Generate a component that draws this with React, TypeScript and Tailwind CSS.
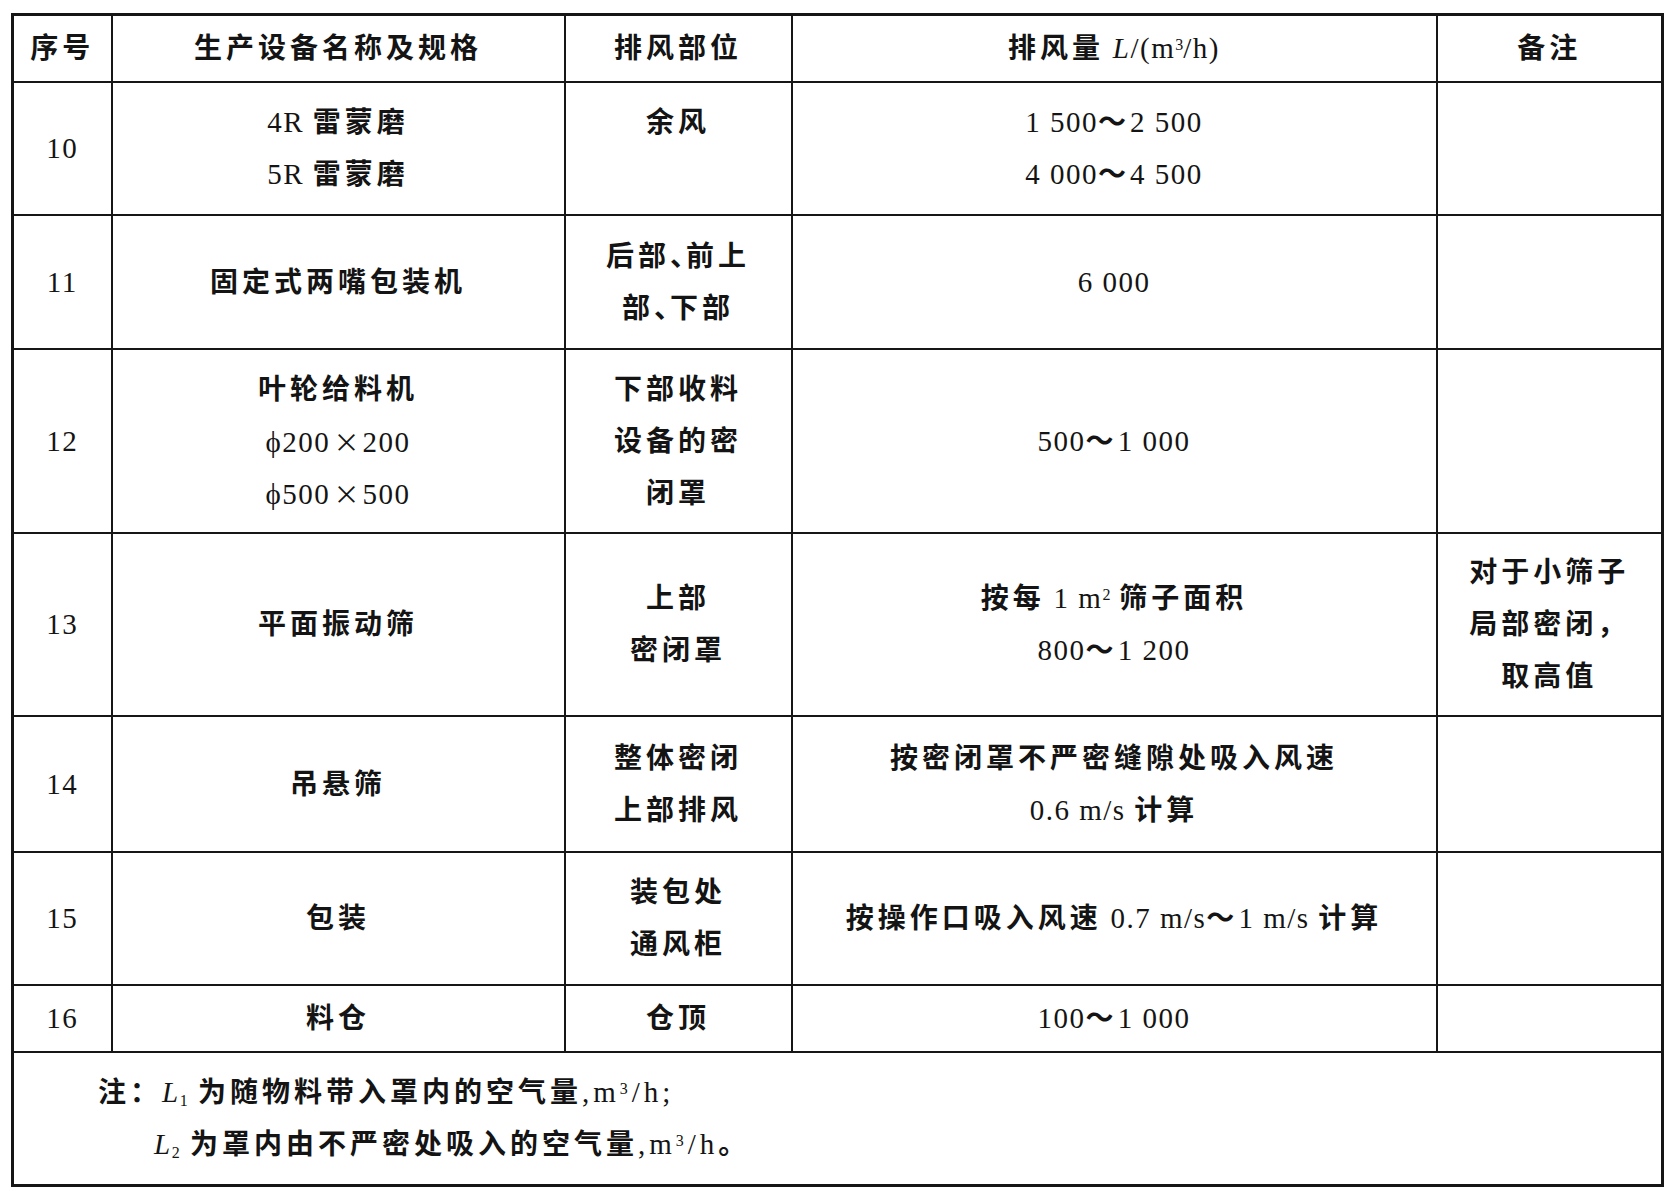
import React from 'react';

const CJK = /([\u3000-\u303f\u4e00-\u9fff\uff00-\uffef]+)/;

// CJK run: spaced and heavier; the enumeration comma sits tight like in print
const Han = ({ text }: { text: string }) => {
  const bits = text.split(/(、)/);
  return (
    <>
      {bits.map((b, i) =>
        b === '、' ? (
          <span key={i} className="font-semibold tracking-[-12px]">、</span>
        ) : (
          <span key={i} className="tracking-[4px] font-semibold">{b}</span>
        )
      )}
    </>
  );
};

const Latin = ({ children, wide }: { children: React.ReactNode; wide?: boolean }) => (
  <span className={wide ? 'text-[29px] tracking-[4px]' : 'text-[29px] tracking-[1.5px]'}>{children}</span>
);

// splits a line into CJK runs and latin runs (serif)
const Line = ({ text }: { text: string }) => {
  const parts = text.split(CJK);
  return (
    <div className="h-[52px] whitespace-pre">
      {parts.map((p, i) => (i % 2 === 1 ? <Han key={i} text={p} /> : <Latin key={i}>{p}</Latin>))}
    </div>
  );
};

const Times = () => <span className="font-['Noto_Sans_CJK_SC'] text-[26px] px-[3px]">×</span>;

type Row = { no: string; h: string; name: React.ReactNode[]; part: string[]; flow: React.ReactNode[]; note: string[] };

const rows: Row[] = [
  { no: '10', h: 'h-[133px]', name: ['4R 雷蒙磨', '5R 雷蒙磨'], part: ['余风', ' '], flow: ['1 500～2 500', '4 000～4 500'], note: [] },
  { no: '11', h: 'h-[134px]', name: ['固定式两嘴包装机'], part: ['后部、前上', '部、下部'], flow: ['6 000'], note: [] },
  {
    no: '12',
    h: 'h-[184px]',
    name: [
      '叶轮给料机',
      <div className="h-[52px]" key="a">
        <Latin>ϕ200</Latin>
        <Times />
        <Latin>200</Latin>
      </div>,
      <div className="h-[52px]" key="b">
        <Latin>ϕ500</Latin>
        <Times />
        <Latin>500</Latin>
      </div>,
    ],
    part: ['下部收料', '设备的密', '闭罩'],
    flow: ['500～1 000'],
    note: [],
  },
  {
    no: '13',
    h: 'h-[183px]',
    name: ['平面振动筛'],
    part: ['上部', '密闭罩'],
    flow: [
      <div className="h-[52px] whitespace-pre" key="a">
        <Han text="按每" />
        <Latin> 1 m</Latin>
        <sup className="text-[16px]">2</sup>
        <Latin> </Latin>
        <Han text="筛子面积" />
      </div>,
      '800～1 200',
    ],
    note: ['对于小筛子', '局部密闭，', '取高值'],
  },
  { no: '14', h: 'h-[136px]', name: ['吊悬筛'], part: ['整体密闭', '上部排风'], flow: ['按密闭罩不严密缝隙处吸入风速', '0.6 m/s 计算'], note: [] },
  { no: '15', h: 'h-[133px]', name: ['包装'], part: ['装包处', '通风柜'], flow: ['按操作口吸入风速 0.7 m/s～1 m/s 计算'], note: [] },
  { no: '16', h: 'h-[67px]', name: ['料仓'], part: ['仓顶'], flow: ['100～1 000'], note: [] },
];

const Lines = ({ items }: { items: React.ReactNode[] }) => (
  <>
    {items.map((t, i) => (typeof t === 'string' ? <Line key={i} text={t} /> : t))}
  </>
);

const cell = 'border-2 border-[#161616] text-center align-middle p-0';

export default function App() {
  return (
    <div className="min-h-screen bg-white pl-[11px] pt-[13px] text-[#141414] text-[28px] leading-[52px] font-['Liberation_Serif','Noto_Sans_CJK_SC',serif]">
      <table className="table-fixed border-collapse border-[3px] border-[#161616] w-[1650px]">
        <colgroup>
          <col className="w-[99px]" />
          <col className="w-[453px]" />
          <col className="w-[227px]" />
          <col className="w-[645px]" />
          <col className="w-[226px]" />
        </colgroup>
        <thead>
          <tr>
            <th className={`${cell} h-[67px] font-normal`}><Line text="序号" /></th>
            <th className={`${cell} font-normal`}><Line text="生产设备名称及规格" /></th>
            <th className={`${cell} font-normal`}><Line text="排风部位" /></th>
            <th className={`${cell} font-normal`}>
              <div className="h-[52px] whitespace-pre">
                <Han text="排风量" />
                <Latin> <i>L</i>/(m</Latin>
                <sup className="text-[16px]">3</sup>
                <Latin>/h)</Latin>
              </div>
            </th>
            <th className={`${cell} font-normal`}><Line text="备注" /></th>
          </tr>
        </thead>
        <tbody>
          {rows.map((r) => (
            <tr key={r.no}>
              <td className={`${cell} ${r.h}`}><Line text={r.no} /></td>
              <td className={cell}><Lines items={r.name} /></td>
              <td className={cell}><Lines items={r.part} /></td>
              <td className={cell}><Lines items={r.flow} /></td>
              <td className={cell}><Lines items={r.note} /></td>
            </tr>
          ))}
          <tr>
            <td colSpan={5} className={`${cell} h-[134px] text-left`}>
              <div className="pl-[84px] h-[52px] whitespace-pre">
                <Han text="注：" />
                <Latin><i>L</i><sub className="text-[16px]">1</sub> </Latin>
                <Han text="为随物料带入罩内的空气量" />
                <Latin wide>,m</Latin>
                <sup className="text-[16px] pr-[4px]">3</sup>
                <Latin wide>/h;</Latin>
              </div>
              <div className="pl-[140px] h-[52px] whitespace-pre">
                <Latin><i>L</i><sub className="text-[16px]">2</sub> </Latin>
                <Han text="为罩内由不严密处吸入的空气量" />
                <Latin wide>,m</Latin>
                <sup className="text-[16px] pr-[4px]">3</sup>
                <Latin wide>/h</Latin>
                <span className="font-semibold">。</span>
              </div>
            </td>
          </tr>
        </tbody>
      </table>
    </div>
  );
}
